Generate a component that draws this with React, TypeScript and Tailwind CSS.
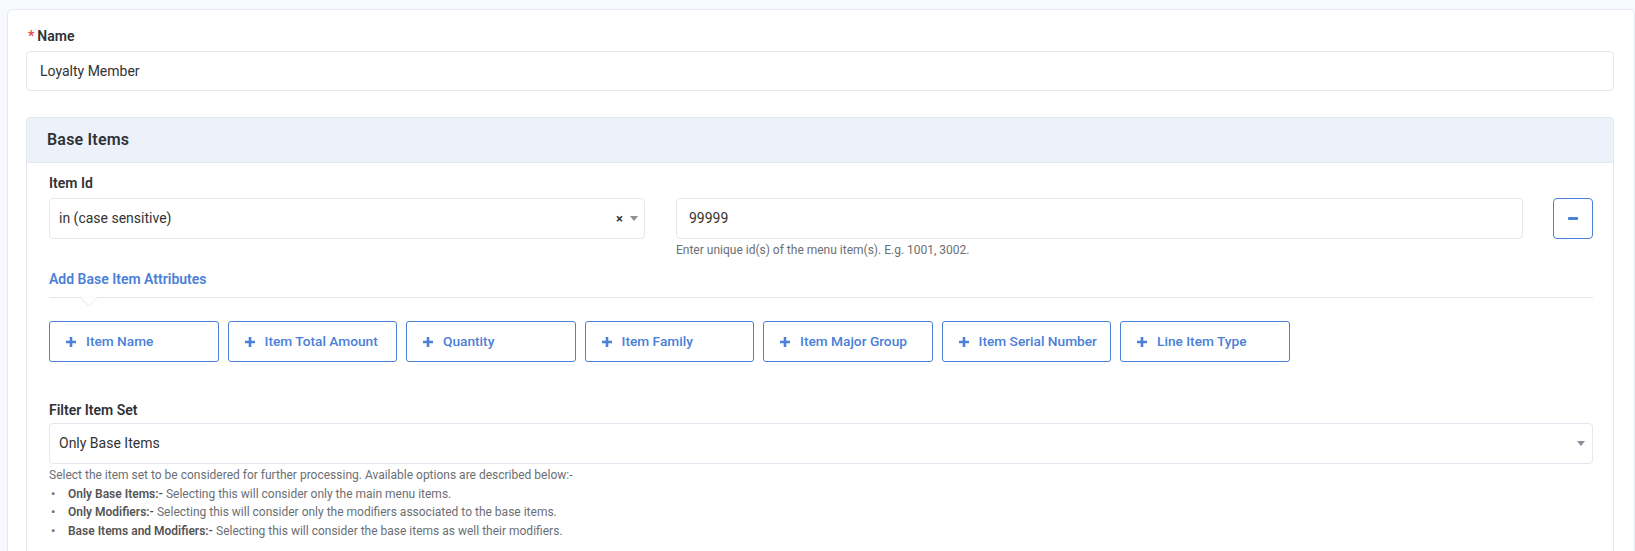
import React from "react";

const attributes = [
  "Item Name",
  "Item Total Amount",
  "Quantity",
  "Item Family",
  "Item Major Group",
  "Item Serial Number",
  "Line Item Type",
];

function Caret() {
  return (
    <svg width="8" height="5" viewBox="0 0 8 5" className="fill-[#8a8f98]">
      <path d="M0 0h8L4 5z" />
    </svg>
  );
}

function PlusIcon() {
  return (
    <svg width="10" height="10" viewBox="0 0 10 10" className="fill-[#4a80d8] shrink-0">
      <path d="M3.7 0h2.6v3.7H10v2.6H6.3V10H3.7V6.3H0V3.7h3.7z" />
    </svg>
  );
}

function App() {
  return (
    <div className="min-h-screen bg-[#f7f9fc] pt-[9px] pl-[7px] font-['Roboto',sans-serif] text-[#333]">
      <div className="bg-white border border-[#e5eaf2] rounded-tl-[6px] rounded-tr-[6px] pl-[18px] pr-[20px] pt-[17px] pb-[20px]">
        <label className="block pl-[2px] text-[14px] font-semibold text-[#2f3237] leading-[18px]">
          <span className="text-[#e5484d] mr-[3px]">*</span>Name
        </label>
        <div className="mt-[6px] h-[40px] border border-[#e3e8f0] rounded-[4px] flex items-center px-[13px] text-[14px] text-[#333]">
          Loyalty Member
        </div>

        <div className="mt-[26px] border border-[#e3e8f0] rounded-[4px]">
          <div className="h-[45px] bg-[#edf2fa] border-b border-[#e3e8f0] flex items-center px-[20px] text-[16px] font-semibold text-[#2f3237] tracking-[0.2px]">
            Base Items
          </div>
          <div className="pl-[22px] pr-[20px] pt-[11px] pb-[20px]">
            <div className="text-[14px] font-semibold text-[#2f3237] leading-[18px]">Item Id</div>
            <div className="mt-[6px] flex items-start">
              <div className="w-[596px] h-[41px] border border-[#e3e8f0] rounded-[4px] flex items-center pl-[9px] pr-[6px] text-[14px]">
                <span className="flex-1">in (case sensitive)</span>
                <span className="text-[13px] font-bold text-[#333] mr-[7px] leading-none">×</span>
                <Caret />
              </div>
              <div className="ml-[31px] flex-1">
                <div className="h-[41px] border border-[#e3e8f0] rounded-[4px] flex items-center px-[12px] text-[14px]">
                  99999
                </div>
                <div className="mt-[4px] text-[12px] text-[#6b6f75] leading-[14px]">
                  Enter unique id(s) of the menu item(s). E.g. 1001, 3002.
                </div>
              </div>
              <button className="ml-[30px] w-[40px] h-[41px] border border-[#4a80d8] rounded-[4px] flex items-center justify-center">
                <span className="block w-[10px] h-[2.5px] bg-[#4a80d8] rounded-[1px]" />
              </button>
            </div>

            <div className="mt-[13px] text-[14px] font-semibold text-[#4a80d8] leading-[18px]">
              Add Base Item Attributes
            </div>
            <div className="relative mt-[9px] border-t border-[#e3e8f0]">
              <svg width="18" height="10" viewBox="0 0 18 10" className="absolute left-[31px] -top-[1px]">
                <path d="M0 0.5L9 9L18 0.5" fill="white" stroke="#e3e8f0" strokeWidth="1" />
                <rect x="1" y="-1" width="16" height="1.5" fill="white" />
              </svg>
            </div>

            <div className="mt-[23px] flex gap-[9px]">
              {attributes.map((a) => (
                <button
                  key={a}
                  className="w-[169.5px] h-[41px] border border-[#4a80d8] rounded-[3px] flex items-center gap-[10px] pl-[16px] text-[13.7px] font-medium text-[#4a80d8] whitespace-nowrap"
                >
                  <PlusIcon />
                  {a}
                </button>
              ))}
            </div>

            <div className="mt-[39px] text-[14px] font-semibold text-[#2f3237] leading-[18px]">Filter Item Set</div>
            <div className="mt-[4px] h-[41px] border border-[#e3e8f0] rounded-[4px] flex items-center pl-[9px] pr-[7px] text-[14px]">
              <span className="flex-1">Only Base Items</span>
              <Caret />
            </div>
            <div className="mt-[2px] text-[12px] text-[#6b6f75] leading-[18.5px]">
              Select the item set to be considered for further processing. Available options are described below:-
            </div>
            <ul className="text-[12px] text-[#6b6f75] leading-[18.5px]">
              <li className="flex items-center">
                <span className="w-[19px] pl-[2px] text-[13px]">•</span>
                <span className="font-semibold text-[#555] mr-[3px]">Only Base Items:-</span>
                Selecting this will consider only the main menu items.
              </li>
              <li className="flex items-center">
                <span className="w-[19px] pl-[2px] text-[13px]">•</span>
                <span className="font-semibold text-[#555] mr-[3px]">Only Modifiers:-</span>
                Selecting this will consider only the modifiers associated to the base items.
              </li>
              <li className="flex items-center">
                <span className="w-[19px] pl-[2px] text-[13px]">•</span>
                <span className="font-semibold text-[#555] mr-[3px]">Base Items and Modifiers:-</span>
                Selecting this will consider the base items as well their modifiers.
              </li>
            </ul>
          </div>
        </div>
      </div>
    </div>
  );
}

export default App;
